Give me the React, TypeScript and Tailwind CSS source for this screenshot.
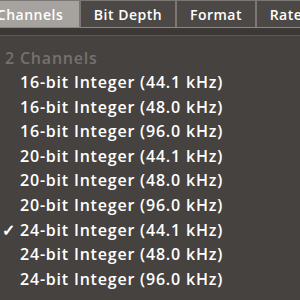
import React from 'react';

const tabs = [
  { label: 'Channels', w: 'w-[100px]', active: true },
  { label: 'Bit Depth', w: 'w-[96px]', active: false },
  { label: 'Format', w: 'w-[80px]', active: false },
  { label: 'Rate', w: 'w-[60px]', active: false },
];

const rows = [
  '16-bit Integer (44.1 kHz)',
  '16-bit Integer (48.0 kHz)',
  '16-bit Integer (96.0 kHz)',
  '20-bit Integer (44.1 kHz)',
  '20-bit Integer (48.0 kHz)',
  '20-bit Integer (96.0 kHz)',
  '24-bit Integer (44.1 kHz)',
  '24-bit Integer (48.0 kHz)',
  '24-bit Integer (96.0 kHz)',
];

const App = () => {
  return (
    <div
      className="w-[300px] h-[300px] overflow-hidden bg-[#46423f] text-white"
      style={{ fontFamily: '"Open Sans", "Liberation Sans", Arial, sans-serif' }}
    >
      <div className="flex h-[28px] -ml-[20px] bg-[#3e3b39] border-b border-[#8a8683]">
        {tabs.map((t) => (
          <div
            key={t.label}
            className={`${t.w} shrink-0 flex items-center justify-center text-[14px] font-semibold tracking-[0.5px] border border-b-0 border-[#7a7673] ${
              t.active ? 'bg-[#a6a29e]' : 'bg-[#4b4845]'
            }`}
          >
            {t.label}
          </div>
        ))}
      </div>
      <div className="h-[8px] bg-[#3b3836] border-b border-[#5c5855]" />
      <div className="pt-[10px]">
        <div className="pl-[5px] text-[16px] font-semibold tracking-[0.8px] leading-[24px] text-[#75716e]">
          2 Channels
        </div>
        {rows.map((r, i) => (
          <div key={r} className="relative pl-[20px] text-[16px] font-semibold tracking-[0.8px] leading-[24.6px]">
            {i === 6 && <span className="absolute left-[2px] top-0">✓</span>}
            {r}
          </div>
        ))}
      </div>
    </div>
  );
};

export default App;
